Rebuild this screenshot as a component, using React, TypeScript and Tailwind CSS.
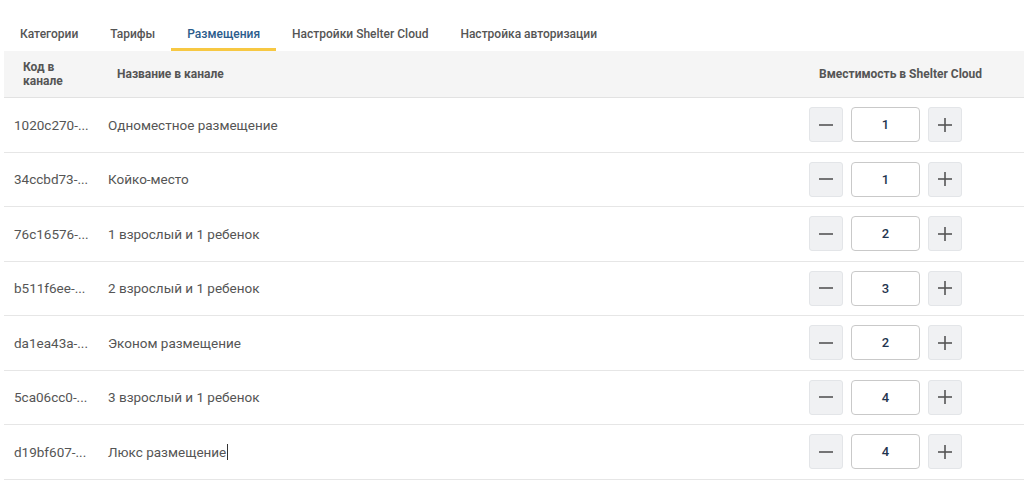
import React, { useState } from "react";

interface Placement {
  code: string;
  name: string;
  capacity: number;
}

const tabs = [
  "Категории",
  "Тарифы",
  "Размещения",
  "Настройки Shelter Cloud",
  "Настройка авторизации",
];

const initialRows: Placement[] = [
  { code: "1020c270-...", name: "Одноместное размещение", capacity: 1 },
  { code: "34ccbd73-...", name: "Койко-место", capacity: 1 },
  { code: "76c16576-...", name: "1 взрослый и 1 ребенок", capacity: 2 },
  { code: "b511f6ee-...", name: "2 взрослый и 1 ребенок", capacity: 3 },
  { code: "da1ea43a-...", name: "Эконом размещение", capacity: 2 },
  { code: "5ca06cc0-...", name: "3 взрослый и 1 ребенок", capacity: 4 },
  { code: "d19bf607-...", name: "Люкс размещение", capacity: 4 },
];

const StepButton: React.FC<{ sign: "minus" | "plus"; onClick: () => void }> = ({
  sign,
  onClick,
}) => (
  <button
    type="button"
    onClick={onClick}
    className="flex h-[35px] w-[34px] items-center justify-center rounded-[3px] border border-[#e3e5e8] bg-[#f0f1f3] text-[#555]"
  >
    <svg width="16" height="16" viewBox="0 0 16 16">
      <path d="M1 8h14" stroke="#555" strokeWidth="1.6" />
      {sign === "plus" && <path d="M8 1v14" stroke="#555" strokeWidth="1.6" />}
    </svg>
  </button>
);

export default function App() {
  const [active, setActive] = useState(2);
  const [rows, setRows] = useState(initialRows);

  const change = (i: number, d: number) =>
    setRows(rows.map((r, j) => (j === i ? { ...r, capacity: Math.max(0, r.capacity + d) } : r)));

  return (
    <div className="h-[494px] w-[1024px] bg-white font-['Roboto',sans-serif] text-[#555]">
      <div className="flex pl-[4px] pt-[24px]">
        {tabs.map((t, i) => (
          <button
            key={t}
            type="button"
            onClick={() => setActive(i)}
            className={
              "h-[27px] border-b-[3px] px-[16px] text-[12px] font-medium leading-[20px] " +
              (i === active ? "border-[#f7c843] text-[#2b5c8c]" : "border-transparent text-[#555]")
            }
            style={{ alignSelf: "flex-start" }}
          >
            <span className="block h-[24px]">{t}</span>
          </button>
        ))}
      </div>

      <div className="ml-[4px]">
        <div className="flex h-[47px] items-center border-b border-[#e2e2e2] bg-[#f5f5f5] text-[12px] font-bold leading-[14px] text-[#555]">
          <div className="w-[94px] pl-[19px]">
            Код в
            <br />
            канале
          </div>
          <div className="flex-1 pl-[19px]">Название в канале</div>
          <div className="w-[224px] pl-[19px]">Вместимость в Shelter Cloud</div>
        </div>

        {rows.map((r, i) => (
          <div
            key={r.code}
            className="flex h-[54.5px] items-center border-b border-[#e6e6e6] text-[13.5px] text-[#555]"
          >
            <div className="w-[94px] pl-[10px]">{r.code}</div>
            <div className="flex flex-1 items-center pl-[10px]">
              {r.name}
              {i === rows.length - 1 && <span className="ml-px h-[16px] w-px bg-[#333]" />}
            </div>
            <div className="flex w-[224px] items-center gap-[8px] pl-[9px]">
              <StepButton sign="minus" onClick={() => change(i, -1)} />
              <div className="flex h-[35px] w-[69px] items-center justify-center rounded-[4px] border border-[#c9c9c9] bg-white text-[13px] font-medium text-[#1f3550]">
                {r.capacity}
              </div>
              <StepButton sign="plus" onClick={() => change(i, 1)} />
            </div>
          </div>
        ))}
      </div>
    </div>
  );
}
